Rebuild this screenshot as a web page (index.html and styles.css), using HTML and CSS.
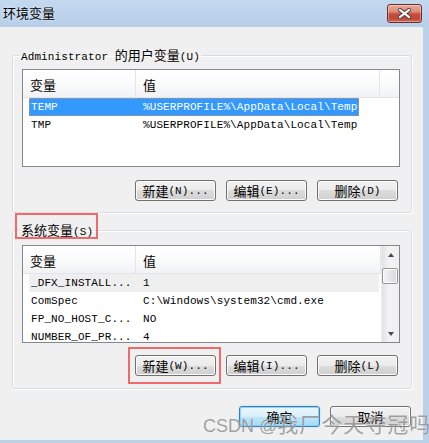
FILE: index.html
```html
<!DOCTYPE html>
<html lang="zh-CN">
<head>
<meta charset="utf-8">
<title>环境变量</title>
<link rel="stylesheet" href="styles.css">
</head>
<body>
<div class="window">
  <div class="titlebar">
    <span class="title">环境变量</span>
    <div class="close">
      <svg width="15" height="11" viewBox="0 0 15 11">
        <path d="M3 2 L12 9 M12 2 L3 9" stroke="#5a4a48" stroke-width="4.2" stroke-linecap="round" fill="none"/>
        <path d="M3 2 L12 9 M12 2 L3 9" stroke="#ffffff" stroke-width="2.2" stroke-linecap="round" fill="none"/>
      </svg>
    </div>
  </div>
  <div class="client">
    <fieldset class="group group-user">
      <legend><span class="m">Administrator </span>的用户变量<span class="m">(U)</span></legend>
      <div class="list">
        <div class="list-main">
          <div class="list-head">
            <div class="hc c1">变量</div>
            <div class="hc c2">值</div>
            <div class="hc c3"></div>
          </div>
          <div class="row row-user selected"><span class="cell n">TEMP</span><span class="cell v">%USERPROFILE%\AppData\Local\Temp</span></div>
          <div class="row row-user"><span class="cell n">TMP</span><span class="cell v">%USERPROFILE%\AppData\Local\Temp</span></div>
        </div>
      </div>
      <div class="btns">
        <div class="btn">新建<span class="m">(N)...</span></div>
        <div class="btn">编辑<span class="m">(E)...</span></div>
        <div class="btn">删除<span class="m">(D)</span></div>
      </div>
    </fieldset>

    <fieldset class="group group-sys">
      <legend class="marked">系统变量<span class="m">(S)</span></legend>
      <div class="list">
        <div class="list-main">
          <div class="list-head">
            <div class="hc c1">变量</div>
            <div class="hc c2">值</div>
          </div>
          <div class="row row-sys inactive"><span class="cell n">_DFX_INSTALL...</span><span class="cell v">1</span></div>
          <div class="row row-sys"><span class="cell n">ComSpec</span><span class="cell v">C:\Windows\system32\cmd.exe</span></div>
          <div class="row row-sys"><span class="cell n">FP_NO_HOST_C...</span><span class="cell v">NO</span></div>
          <div class="row row-sys"><span class="cell n">NUMBER_OF_PR...</span><span class="cell v">4</span></div>
        </div>
        <div class="sb">
          <div class="sb-btn"><span class="arr up"></span></div>
          <div class="sb-track"><div class="thumb"></div></div>
          <div class="sb-btn"><span class="arr down"></span></div>
        </div>
      </div>
      <div class="btns">
        <div class="btn marked">新建<span class="m">(W)...</span></div>
        <div class="btn">编辑<span class="m">(I)...</span></div>
        <div class="btn">删除<span class="m">(L)</span></div>
      </div>
    </fieldset>

    <div class="dlg-btns">
      <div class="btn default">确定</div>
      <div class="btn">取消</div>
    </div>
  </div>
  <div class="watermark"><span class="wl">CSDN @</span>我厂今天夺冠吗</div>
</div>
</body>
</html>
```

FILE: styles.css
```css
* { box-sizing: border-box; }
html, body { margin: 0; padding: 0; }
body {
  width: 429px;
  height: 443px;
  overflow: hidden;
  background: #bad1ea;
  font-family: "Noto Sans CJK SC", sans-serif;
  font-size: 13px;
  color: #000;
}
.m {
  font-family: "Liberation Mono", "DejaVu Sans Mono", monospace;
  font-size: 11px;
  letter-spacing: 0.1px;
}
.window {
  position: relative;
  width: 429px;
  height: 443px;
  display: flex;
  flex-direction: column;
}
.titlebar {
  height: 27px;
  flex: none;
  display: flex;
  justify-content: space-between;
  align-items: flex-start;
  padding: 0 7px 0 3px;
  background: linear-gradient(#c4d9f0, #b8cfe9);
}
.title {
  margin-top: 5px;
  line-height: 16px;
  font-size: 13px;
  text-shadow: 0 0 3px rgba(255,255,255,0.7);
}
.close {
  margin-top: 4px;
  width: 35px;
  height: 19px;
  border: 1px solid #6a2f28;
  border-radius: 3px;
  background: linear-gradient(#e9aa9c 0%, #dc8a78 40%, #c8503f 52%, #c04534 78%, #d26a55 100%);
  box-shadow: inset 0 0 0 1px rgba(255,255,255,0.35);
  display: flex;
  align-items: center;
  justify-content: center;
}
.client {
  flex: 1;
  margin: 0 6px 3px 0;
  background: #f0f0f0;
  padding-top: 20px;
  display: flex;
  flex-direction: column;
}
.group {
  margin: 0 11px 0 12px;
  border: 1px solid #d5dfe5;
  border-radius: 3px;
  box-shadow: inset 1px 1px #fff, 1px 1px #fff;
  min-width: 0;
}
.group legend {
  margin-left: -3px;
  padding: 0 2px;
  line-height: 16px;
  height: 16px;
  position: relative;
}
.group-user { padding: 6px 11px 11px 9px; }
.group-sys { padding: 7px 11px 12px 9px; margin-top: 9px; }

.list {
  height: 98px;
  border: 1px solid #828790;
  background: #fff;
  display: flex;
  overflow: hidden;
}
.list-main {
  flex: 1;
  min-width: 0;
  overflow: hidden;
}
.list-head {
  height: 28px;
  display: flex;
  background: linear-gradient(#ffffff 0%, #fbfbfc 45%, #f1f2f4 100%);
  border-bottom: 1px solid #e2e4e7;
}
.hc {
  padding: 3px 0 0 7px;
  line-height: 24px;
  border-right: 1px solid #e3e5e8;
  font-size: 13px;
}
.c1 { width: 113px; }
.c2 { width: 244px; }
.c3 { flex: 1; border-right: 0; }
.group-sys .c2 { flex: 1; border-right: 1px solid #e3e5e8; }

.row {
  display: flex;
  height: 18px;
  line-height: 18px;
  margin-left: 6px;
  font-family: "Liberation Mono", "DejaVu Sans Mono", monospace;
  font-size: 11px;
  letter-spacing: 0.1px;
  white-space: nowrap;
}
.row-user { width: 330px; }
.row-sys { width: 350px; }
.cell.n { width: 114px; padding-left: 2px; }
.cell.v { flex: 1; }
.selected {
  background: #3399ff;
  color: #fff;
  outline: 1px dotted #c9925a;
  outline-offset: -1px;
}
.inactive { background: #efefef; }

.sb {
  width: 18px;
  flex: none;
  display: flex;
  flex-direction: column;
  background: linear-gradient(to right, #e2e2e2, #f3f3f3 40%, #f0f0f0);
  border-left: 1px solid #ececec;
}
.sb-btn {
  height: 17px;
  display: flex;
  align-items: center;
  justify-content: center;
}
.arr {
  width: 0;
  height: 0;
  border-left: 3.5px solid transparent;
  border-right: 3.5px solid transparent;
}
.arr.up { border-bottom: 4px solid #4a4a4a; }
.arr.down { border-top: 4px solid #4a4a4a; }
.sb-track { flex: 1; padding: 5px 1px 0 0; }
.thumb {
  height: 16px;
  border: 1px solid #979797;
  border-radius: 2px;
  background: linear-gradient(to right, #f5f5f5, #e6e6e6 50%, #d9d9d9);
  box-shadow: inset 0 0 0 1px #fafafa;
}

.btns {
  display: flex;
  justify-content: flex-end;
  gap: 10px;
  padding-right: 2px;
}
.group-user .btns { margin-top: 13px; }
.group-sys .btns { margin-top: 12px; }
.btn {
  width: 81px;
  height: 21px;
  border: 1px solid #707070;
  border-radius: 3px;
  background: linear-gradient(#f2f2f2 0%, #ebebeb 50%, #dddddd 50%, #cfcfcf 100%);
  box-shadow: inset 0 0 0 1px #fcfcfc;
  display: flex;
  align-items: center;
  justify-content: center;
  font-size: 13px;
  line-height: 16px;
  position: relative;
}
.btn.default {
  border-color: #3c7fb1;
  background: linear-gradient(#eaf6fd 0%, #d9f0fc 50%, #bee6fd 50%, #a7d9f5 100%);
  box-shadow: inset 0 0 0 1px #8ed4f8, 0 0 2px #9ad8f8;
}
.dlg-btns {
  display: flex;
  justify-content: flex-end;
  gap: 10px;
  margin: 17px 12px 0 0;
}

legend.marked::after {
  content: "";
  position: absolute;
  left: -4px;
  right: -3px;
  top: -9px;
  bottom: -1px;
  border: 2px solid #ef6a6a;
}
.btn.marked::after {
  content: "";
  position: absolute;
  left: -8px;
  right: -6px;
  top: -9px;
  bottom: -9px;
  border: 2px solid #ef6a6a;
}

.watermark {
  position: absolute;
  left: 203px;
  top: 410px;
  line-height: 26px;
  font-size: 21px;
  letter-spacing: 1px;
  color: rgba(120, 120, 120, 0.7);
  white-space: nowrap;
  font-family: "Noto Sans CJK SC", sans-serif;
  text-shadow: 0 0 1px rgba(255,255,255,0.6);
}
.wl { font-size: 18px; letter-spacing: 0; font-family: "Liberation Sans", sans-serif; }
```
